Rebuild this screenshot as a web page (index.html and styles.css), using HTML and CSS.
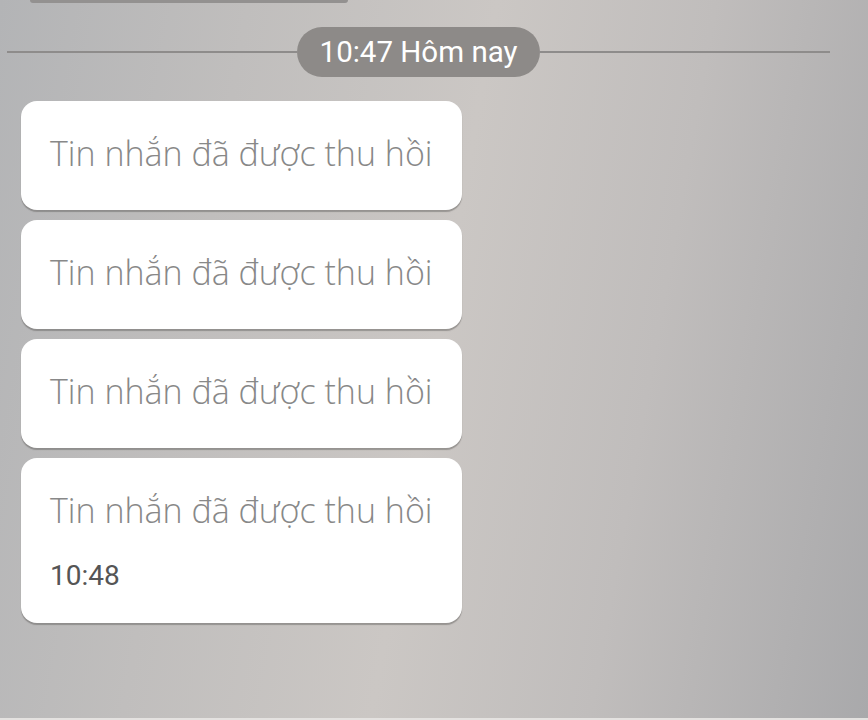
FILE: index.html
```html
<html>
<head>
<meta charset="utf-8">
<link rel="stylesheet" href="styles.css">
</head>
<body>

  <div class="chat">
    <div class="stub"></div>

    <div class="day-row">
      <div class="day-line"></div>
      <div class="day-pill">10:47 Hôm nay</div>
      <div class="day-line"></div>
    </div>

    <div class="message-list">
      <div class="message">
        <div class="text">Tin nhắn đã được thu hồi</div>
      </div>
      <div class="message">
        <div class="text">Tin nhắn đã được thu hồi</div>
      </div>
      <div class="message">
        <div class="text">Tin nhắn đã được thu hồi</div>
      </div>
      <div class="message">
        <div class="text">Tin nhắn đã được thu hồi</div>
        <div class="time">10:48</div>
      </div>
    </div>
  </div>

</body>
</html>
```

FILE: styles.css
```css
html, body {
  margin: 0;
  height: 100%;
}

body {
  font-family: "Open Sans", "Noto Sans", sans-serif;
  background: linear-gradient(100deg, #b3b4b6 0%, #c0bebd 25%, #cbc7c4 50%, #c0bdbc 72%, #a9a9ab 100%);
  overflow: hidden;
}

.chat {
  height: 718px;
  border-bottom: 2px solid #e4e2e0;
}

.stub {
  width: 318px;
  height: 3px;
  margin-left: 30px;
  background-color: #939190;
  border-radius: 0 0 6px 6px;
}

.day-row {
  display: flex;
  align-items: center;
  margin: 24px 38px 0 7px;
}

.day-line {
  flex: 1;
  height: 2px;
  background-color: #8e8c8b;
}

.day-pill {
  height: 50px;
  line-height: 50px;
  padding: 0 23px;
  border-radius: 25px;
  background-color: #8d8a88;
  color: white;
  font-family: Roboto, "Liberation Sans", sans-serif;
  font-size: 29.5px;
}

.message-list {
  display: flex;
  flex-direction: column;
  gap: 10px;
  margin: 24px 0 0 21px;
  width: 441px;
}

.message {
  background-color: white;
  border-radius: 16px;
  padding: 30px 28px 34px 29px;
  box-shadow: 0 2px 1px rgba(90, 88, 86, 0.45);
}

.text {
  font-size: 34px;
  font-weight: 350;
  line-height: 45px;
  color: #888888;
  white-space: nowrap;
}

.time {
  margin-top: 27px;
  margin-bottom: -3px;
  font-family: Roboto, "Liberation Sans", sans-serif;
  font-size: 28px;
  line-height: 32px;
  color: #555555;
}
```
